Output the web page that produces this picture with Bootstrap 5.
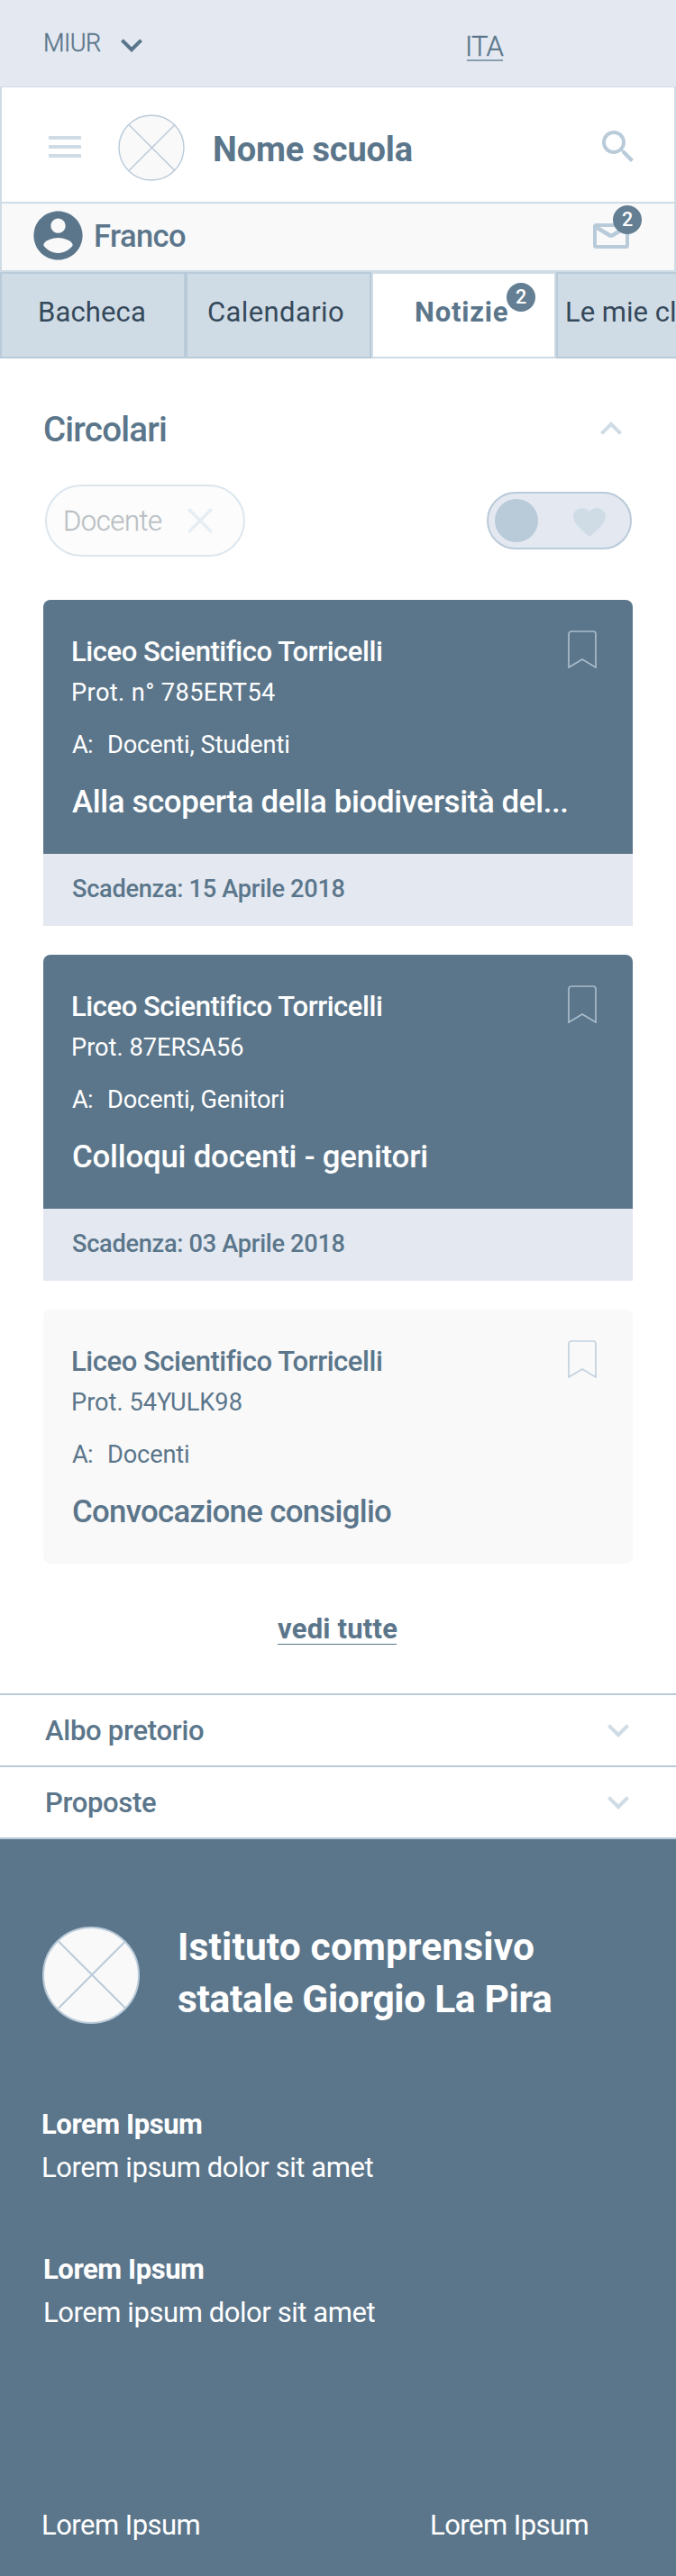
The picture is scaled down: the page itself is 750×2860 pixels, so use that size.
<!DOCTYPE html>
<html lang="it">
<head>
<meta charset="utf-8">
<meta name="viewport" content="width=device-width, initial-scale=1">
<title>Nome scuola</title>
<link rel="stylesheet" href="https://cdn.jsdelivr.net/npm/bootstrap@5.3.0/dist/css/bootstrap.min.css">
<style>
:root{--slate:#5b768b;--ice:#e4e9f1;--mist:#d0dce5;--steel:#b9cad9;--paper:#f9f9f9}
body{font-family:Roboto,"Liberation Sans",sans-serif;color:var(--slate);background:#fff;overflow-x:hidden}
svg{display:block;flex:none}
a{color:inherit;text-decoration:none}
.fw-med{font-weight:500}
.topbar{height:96px;background:var(--ice);padding-left:48px}
.topbar .miur{font-size:27.2px;line-height:40px;font-weight:300;-webkit-text-stroke:.4px;margin-top:28px;width:74px;letter-spacing:-.55px}
.topbar .miur-arrow{margin-top:26px}
.lang{font-size:31px;line-height:28px;font-weight:300;-webkit-text-stroke:.4px;margin:38px 0 0 348px;width:40px;height:30px;border-bottom:2px solid #8aa0b0;letter-spacing:-.8px;text-indent:-2px}
.brandbar{height:130px;border:2px solid var(--mist);border-top-width:1px;padding-left:52px}
.brandbar .menu{margin-top:54px}
.brandbar .logo{margin:30px 0 0 41px}
.brandbar h1{font-size:38px;line-height:60px;font-weight:700;margin:39px 0 0 31px;letter-spacing:-.15px}
.brandbar .find{margin:42px 38px 0 auto}
.userbar{height:76px;background:var(--paper);border:2px solid var(--mist);border-top:0;padding-left:30px}
.userbar .avatar{margin-top:3px}
.userbar .who{font-size:34.5px;line-height:50px;margin:11px 0 0 7px;letter-spacing:-.59px}
.mailbox{margin:22px 50px 0 auto;width:40px;height:28px}
.count{width:32px;height:32px;border-radius:50%;background:#647f93;color:#fff;font-size:21.5px;line-height:32px;font-weight:500;text-align:center}
.mailbox .count{left:22px;top:-20px}
.school-tabs{height:96px;overflow:hidden}
.school-tabs a{flex:0 0 206px;height:96px;border:2px solid var(--steel);background:var(--mist);color:#35495b;font-size:31px;line-height:60px;padding-top:13px;white-space:nowrap}
.school-tabs .on{flex-basis:205px;background:#fff;border-color:var(--mist);color:var(--slate);font-weight:700;letter-spacing:.8px}
.school-tabs .count{left:148px;top:10px}
.news{padding:49px 48px 0}
.news h2{font-size:38.5px;line-height:60px;letter-spacing:-.79px}
.chip{width:222px;height:80px;border:2px solid #dce6ee;border-radius:40px;background:#fcfcfc;padding-left:18px;margin-left:2px}
.chip span{font-size:31px;line-height:60px;font-weight:300;color:#b9bfc4;-webkit-text-stroke:.3px;letter-spacing:-.45px;margin-top:9px;width:138px}
.fav{width:161px;height:64px;border:2px solid var(--steel);border-radius:32px;background:var(--ice);margin:8px 1px 0 0;padding-left:7px}
.fav i{width:48px;height:48px;border-radius:50%;background:var(--steel);margin-top:6px}
.fav svg{margin:16px 0 0 39px}
.notice{border:0;border-radius:8px 8px 0 0;margin-bottom:32px;color:var(--slate)}
.notice .card-body{height:282px;flex:none;padding:38px 32px 0;background:var(--slate);color:#fff;border-radius:8px 8px 0 0}
.notice .card-footer{height:80px;padding:0 32px;border:0;border-radius:0;background:var(--ice);color:var(--slate);font-size:27.2px;line-height:79px;letter-spacing:-.3px}
.notice.read,.notice.read .card-body{background:var(--paper);color:var(--slate);border-radius:8px}
.notice h3{font-size:31px;line-height:40px;margin:0;letter-spacing:-.45px;text-indent:-1px}
.notice p{font-size:27.2px;line-height:40px;margin:0}
.notice .num{margin:5px 0 18px;text-indent:-1px}
.notice .to{letter-spacing:-.13px}
.notice .to span{width:39px;letter-spacing:-.7px}
.notice h4{font-size:34.8px;line-height:50px;margin:18px 0 0;white-space:nowrap}
.notice .ribbon{top:34px;right:40px}
.all{font-size:31px;line-height:32px;height:33px;font-weight:700;letter-spacing:.2px;border-bottom:1px solid var(--slate);width:132px;white-space:nowrap}
.folds{margin-top:54px}
.folds a{height:80px;border-top:2px solid var(--steel);padding:0 40px 0 50px;font-size:31px;line-height:79px}
.folds a:last-child{height:82px;border-bottom:2px solid var(--steel)}
.folds svg{margin-top:15px}
.foot{height:818px;background:var(--slate);color:#fff;padding:91px 0 0 47px}
.foot h2{font-size:42.5px;line-height:58px;font-weight:700;margin:0 0 0 42px}
.foot p{font-size:31px;line-height:48px;margin:0 0 0 -1px;letter-spacing:-.43px}
.foot .second p{margin-left:1px}
</style>
</head>
<body>
<svg width="0" height="0" class="position-absolute"><defs>
<symbol id="down" viewBox="0 0 24 24"><path d="M7.41 8.59 12 13.17l4.59-4.58L18 10l-6 6-6-6z"/></symbol>
<symbol id="mark" viewBox="0 0 32 42"><path d="M1 41V4a3 3 0 0 1 3-3h24a3 3 0 0 1 3 3v37l-15-9z" fill="none" stroke-width="1.7"/></symbol>
</defs></svg>

<div class="topbar d-flex align-items-start">
  <span class="miur">MIUR</span>
  <svg class="miur-arrow" width="48" height="48" fill="#5b768b"><use href="#down"/></svg>
  <a class="lang" href="#">ITA</a>
</div>

<header class="brandbar d-flex align-items-start">
  <svg class="menu" width="36" height="24" fill="#d0dce5"><path d="M0 0h36v4H0zM0 10h36v4H0zM0 20h36v4H0z"/></svg>
  <svg class="logo" width="74" height="74" viewBox="0 0 74 74" fill="none" stroke="#b9cad9" stroke-width="1.4"><circle cx="37" cy="37" r="36" fill="#f9f9f9"/><path d="M12 11.500 63 62.500M63 11.500 12 62.500"/></svg>
  <h1>Nome scuola</h1>
  <svg class="find" width="48" height="48" viewBox="0 0 24 24" fill="#b9cad9"><path d="M15.500 14h-.79l-.28-.27C15.410 12.590 16 11.110 16 9.500 16 5.910 13.090 3 9.500 3S3 5.910 3 9.500 5.910 16 9.500 16c1.610 0 3.090-.59 4.230-1.570l.27.28v.79l5 4.990L20.490 19l-4.990-5zm-6 0C7.010 14 5 11.990 5 9.500S7.010 5 9.500 5 14 7.010 14 9.500 11.990 14 9.500 14z"/></svg>
</header>

<div class="userbar d-flex align-items-start">
  <svg class="avatar" width="65" height="65" viewBox="0 0 24 24" fill="#5b768b"><path fill-rule="evenodd" d="M12 2C6.480 2 2 6.480 2 12s4.480 10 10 10 10-4.480 10-10S17.520 2 12 2zm0 3c1.660 0 3 1.340 3 3s-1.340 3-3 3-3-1.340-3-3 1.340-3 3-3zm0 14.200c-2.500 0-4.710-1.280-6-3.220.03-1.990 4-3.080 6-3.080 1.990 0 5.970 1.090 6 3.080-1.290 1.940-3.500 3.220-6 3.220z"/></svg>
  <span class="who fw-med">Franco</span>
  <div class="mailbox position-relative">
    <svg width="40" height="28" fill="none" stroke="#b9cad9" stroke-width="4"><rect x="2" y="2" width="36" height="24" rx="1.500"/><path d="m3 4 15 9q2 1.200 4 0l15-9" stroke-width="4.400"/></svg>
    <span class="count position-absolute">2</span>
  </div>
</div>

<nav class="school-tabs d-flex">
  <a href="#" style="padding-left:40px;letter-spacing:.14px">Bacheca</a>
  <a href="#" style="padding-left:22px;letter-spacing:.39px">Calendario</a>
  <a href="#" class="on position-relative" style="padding-left:46px">Notizie<span class="count position-absolute" style="letter-spacing:0">2</span></a>
  <a href="#" style="padding-left:8px">Le mie classi</a>
</nav>

<main class="news">
  <div class="d-flex align-items-start justify-content-between">
    <h2 class="fw-med mb-0">Circolari</h2>
    <svg width="48" height="48" fill="#d0dce5" style="margin-top:5px"><use href="#down" transform="rotate(180 24 24)"/></svg>
  </div>
  <div class="d-flex justify-content-between align-items-start" style="margin:31px 0 48px">
    <div class="chip d-flex align-items-start"><span>Docente</span>
      <svg width="28" height="28" stroke="#e7eef3" stroke-width="3.600" style="margin-top:24px"><path d="m1.300 1.300 25.400 25.400M26.700 1.300 1.300 26.700"/></svg></div>
    <div class="fav d-flex align-items-start"><i></i>
      <svg width="36" height="32" viewBox="2 3 20 18.350" preserveAspectRatio="none" fill="#d0dce5"><path d="m12 21.350-1.450-1.320C5.400 15.360 2 12.280 2 8.500 2 5.420 4.420 3 7.500 3c1.740 0 3.410.81 4.500 2.090C13.090 3.810 14.760 3 16.500 3 19.580 3 22 5.420 22 8.500c0 3.780-3.400 6.860-8.550 11.540z"/></svg></div>
  </div>

  <article class="card notice">
    <div class="card-body">
      <h3 class="fw-med">Liceo Scientifico Torricelli</h3>
      <p class="num" style="letter-spacing:.39px">Prot. n° 785ERT54</p>
      <p class="to d-flex"><span>A:</span>Docenti, Studenti</p>
      <h4 class="fw-med" style="letter-spacing:-.35px">Alla scoperta della biodiversità del...</h4>
      <svg class="ribbon position-absolute" width="32" height="42" stroke="#a9bccb"><use href="#mark"/></svg>
    </div>
    <div class="card-footer fw-med">Scadenza: 15 Aprile 2018</div>
  </article>

  <article class="card notice">
    <div class="card-body">
      <h3 class="fw-med">Liceo Scientifico Torricelli</h3>
      <p class="num">Prot. 87ERSA56</p>
      <p class="to d-flex"><span>A:</span>Docenti, Genitori</p>
      <h4 class="fw-med" style="letter-spacing:-.2px">Colloqui docenti - genitori</h4>
      <svg class="ribbon position-absolute" width="32" height="42" stroke="#a9bccb"><use href="#mark"/></svg>
    </div>
    <div class="card-footer fw-med">Scadenza: 03 Aprile 2018</div>
  </article>

  <article class="card notice read mb-0">
    <div class="card-body">
      <h3 class="fw-med">Liceo Scientifico Torricelli</h3>
      <p class="num">Prot. 54YULK98</p>
      <p class="to d-flex"><span>A:</span>Docenti</p>
      <h4 class="fw-med" style="letter-spacing:-.7px">Convocazione consiglio</h4>
      <svg class="ribbon position-absolute" width="32" height="42" stroke="#c3d2df"><use href="#mark"/></svg>
    </div>
  </article>

  <a class="all d-block" href="#" style="margin:57px 0 0 260px">vedi tutte</a>
</main>

<div class="folds">
  <a href="#" class="d-flex align-items-start justify-content-between fw-med" style="letter-spacing:-.27px">Albo pretorio<svg width="48" height="48" fill="#d0dce5"><use href="#down"/></svg></a>
  <a href="#" class="d-flex align-items-start justify-content-between fw-med" style="letter-spacing:-.32px">Proposte<svg width="48" height="48" fill="#d0dce5"><use href="#down"/></svg></a>
</div>

<footer class="foot">
  <div class="d-flex align-items-start">
    <svg width="108" height="108" viewBox="0 0 108 108" fill="none" stroke="#b9cad9" stroke-width="2" style="margin-top:6px"><circle cx="54" cy="54" r="53" fill="#f9f9f9"/><path d="m18 16.500 74 74M92 16.500l-74 74"/></svg>
    <h2><span style="letter-spacing:.13px">Istituto comprensivo</span><br><span style="letter-spacing:-.32px">statale Giorgio La Pira</span></h2>
  </div>
  <div style="margin-top:86px">
    <p class="fw-bold">Lorem Ipsum</p>
    <p>Lorem ipsum dolor sit amet</p>
  </div>
  <div class="second" style="margin-top:64.500px">
    <p class="fw-bold">Lorem Ipsum</p>
    <p>Lorem ipsum dolor sit amet</p>
  </div>
  <div class="d-flex" style="margin-top:188px">
    <p style="width:431px;letter-spacing:-.53px">Lorem Ipsum</p>
    <p class="ms-0" style="letter-spacing:-.53px">Lorem Ipsum</p>
  </div>
</footer>
<script src="https://cdn.jsdelivr.net/npm/bootstrap@5.3.0/dist/js/bootstrap.bundle.min.js"></script>
</body>
</html>
